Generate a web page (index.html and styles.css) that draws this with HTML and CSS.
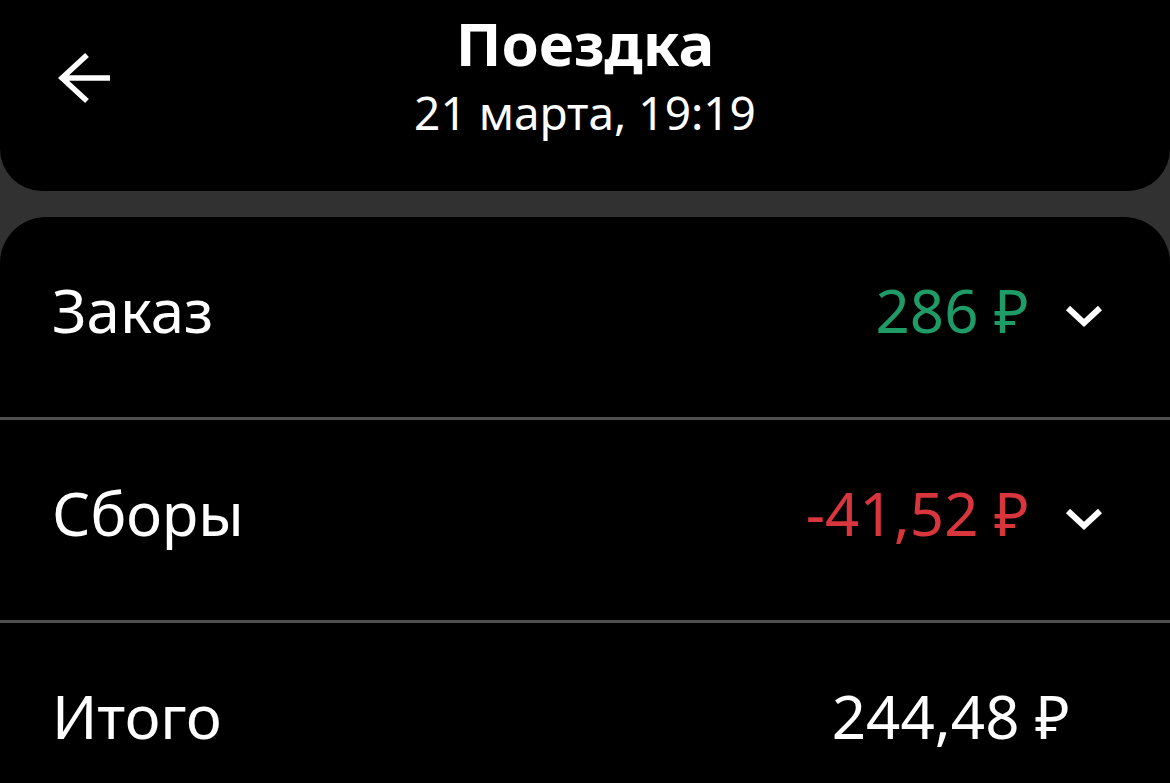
FILE: index.html
```html
<!DOCTYPE html>
<html lang="ru">
<head>
    <meta charset="UTF-8">
    <meta name="viewport" content="width=device-width, initial-scale=1.0">
    <title>Поездка</title>
    <link rel="stylesheet" href="styles.css">
</head>
<body>
    <div class="header">
        <a class="back-btn" href="#">
            <svg width="54" height="52" viewBox="0 0 54 52">
                <path d="M29 2 L4 25 L29 48 M4 25 H52" fill="none" stroke="#fff" stroke-width="5.5"/>
            </svg>
        </a>
        <div class="header-title">
            <h1>Поездка</h1>
            <div class="date">21 марта, 19:19</div>
        </div>
    </div>

    <div class="card">
        <div class="row">
            <div class="label">Заказ</div>
            <div class="value-group">
                <span class="value income">286 ₽</span>
                <svg class="chevron" width="38" height="24" viewBox="0 0 38 24">
                    <path d="M3 4 L19 19 L35 4" fill="none" stroke="#fff" stroke-width="6"/>
                </svg>
            </div>
        </div>
        <div class="row">
            <div class="label">Сборы</div>
            <div class="value-group">
                <span class="value expense">-41,52 ₽</span>
                <svg class="chevron" width="38" height="24" viewBox="0 0 38 24">
                    <path d="M3 4 L19 19 L35 4" fill="none" stroke="#fff" stroke-width="6"/>
                </svg>
            </div>
        </div>
        <div class="row total">
            <div class="label">Итого</div>
            <div class="value-group">
                <span class="value">244,48 ₽</span>
            </div>
        </div>
    </div>
</body>
</html>
```

FILE: styles.css
```css
html, body {
    height: 100%;
}
body {
    font-family: "Noto Sans", "Open Sans", sans-serif;
    margin: 0;
    padding: 0;
    background-color: #323131;
    color: #fff;
    overflow: hidden;
}
.header {
    background-color: #000;
    height: 191px;
    border-radius: 0 0 42px 42px;
    display: grid;
    grid-template-columns: 1fr auto 1fr;
}
.back-btn {
    display: block;
    width: 54px;
    height: 52px;
    margin: 53px 0 0 58px;
}
.back-btn svg {
    display: block;
}
.header-title {
    text-align: center;
    padding-top: 8px;
}
.header-title h1 {
    margin: 0;
    font-size: 60px;
    font-weight: 700;
    line-height: 70px;
}
.date {
    font-size: 46px;
    line-height: 54px;
    margin-top: 7px;
}
.card {
    background-color: #000;
    margin-top: 26px;
    border-radius: 46px 46px 0 0;
    height: 566px;
    overflow: hidden;
}
.row {
    display: flex;
    justify-content: space-between;
    align-items: center;
    height: 186px;
    padding: 0 67px 14px 52px;
    border-bottom: 3px solid #4e4e4e;
}
.row.total {
    border-bottom: none;
    padding-right: 100px;
}
.label, .value {
    font-size: 60px;
}
.value-group {
    display: flex;
    align-items: center;
    gap: 36px;
}
.value.income {
    color: #1f9b67;
}
.value.expense {
    color: #d8353d;
}
.chevron {
    display: block;
    margin-top: 12px;
}
```
